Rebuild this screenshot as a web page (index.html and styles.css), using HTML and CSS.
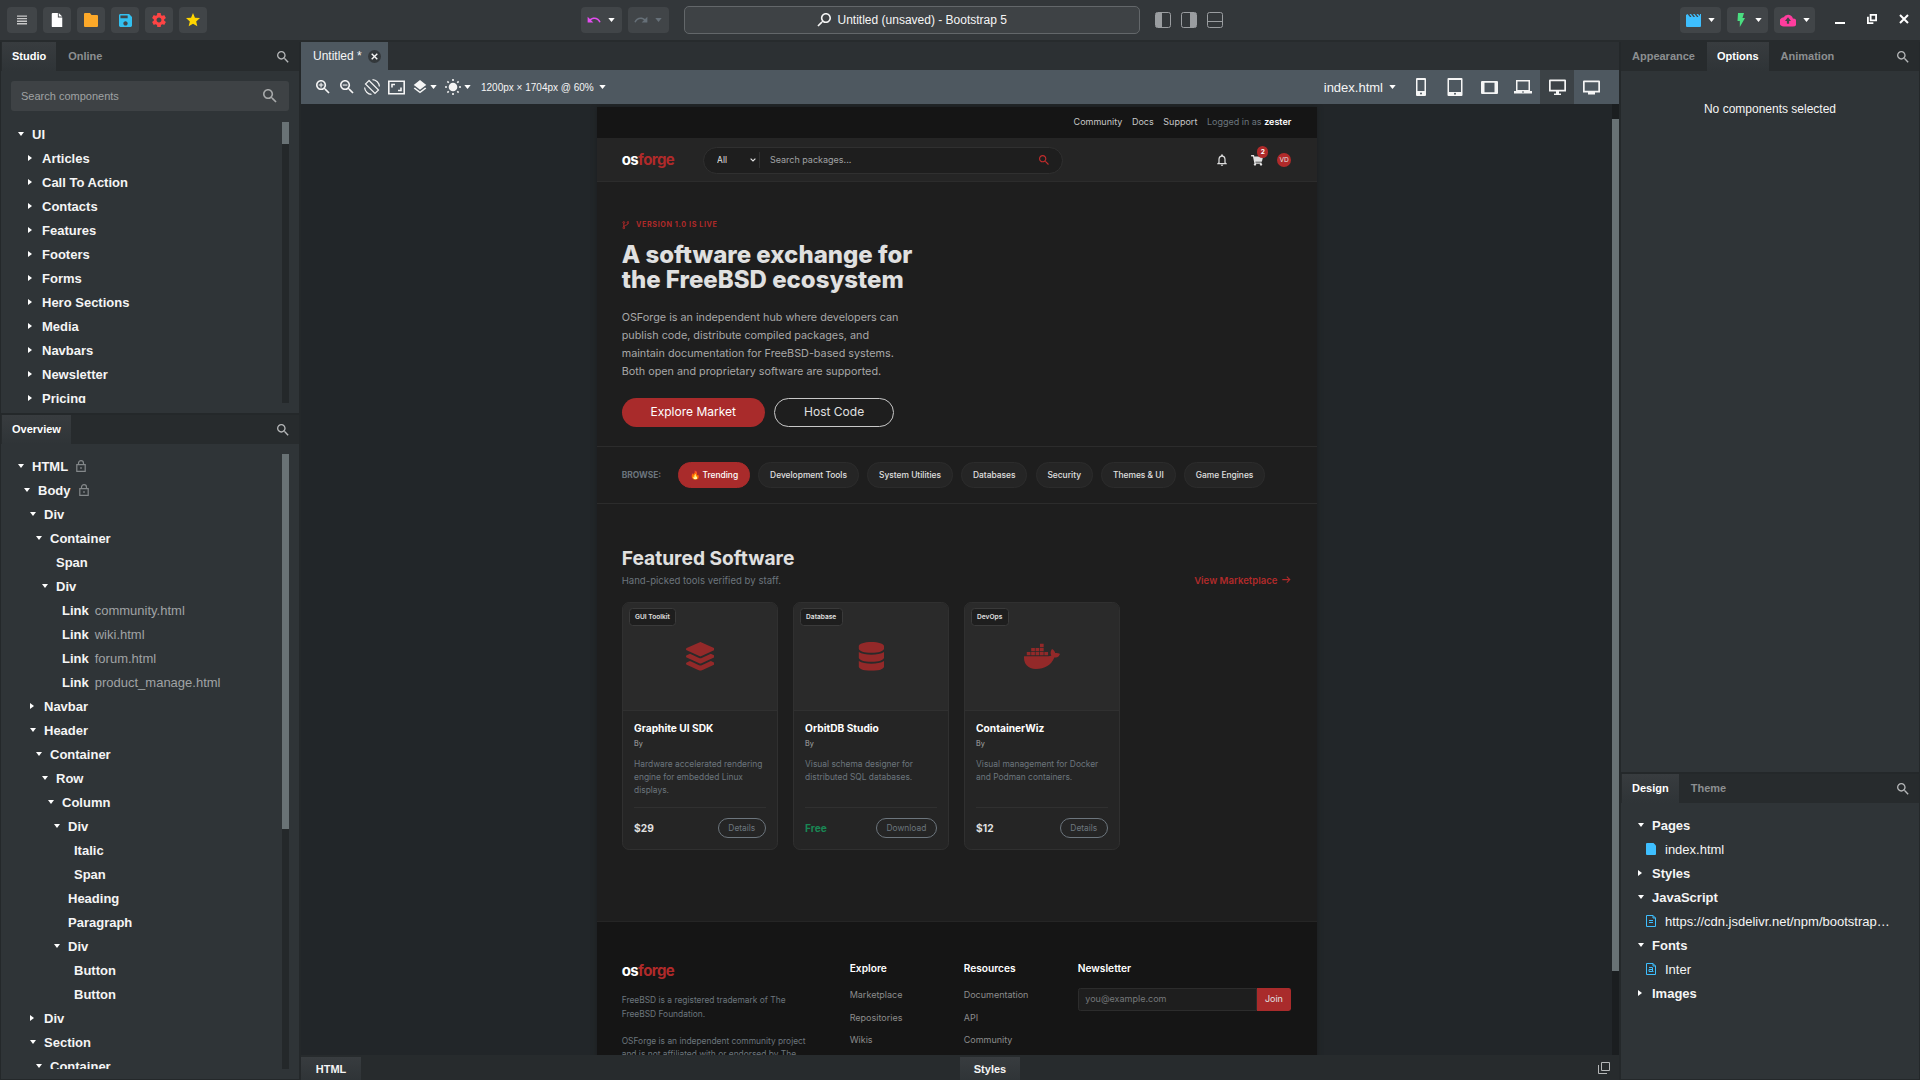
FILE: index.html
```html
<!DOCTYPE html>
<html lang="en">
<head>
    <meta charset="UTF-8">
    <meta name="viewport" content="width=device-width, initial-scale=1.0">
    <title>Untitled (unsaved) - Bootstrap 5</title>
    <link rel="stylesheet" href="styles.css">
</head>
<body>

<!-- Icon definitions -->
<svg class="defs" aria-hidden="true">
    <symbol id="i-menu" viewBox="0 0 11 10"><path d="M0 0h11v1.5H0zM0 2.8h11v1.5H0zM0 5.6h11v1.5H0zM0 8.4h11v1.5H0z"/></symbol>
    <symbol id="i-file" viewBox="0 0 14 16"><path d="M2 0h6v5h5v11H2a1 1 0 0 1-1-1V1a1 1 0 0 1 1-1zM9 0l4 4H9z"/></symbol>
    <symbol id="i-folder" viewBox="0 0 14 14"><path d="M1 0h5l1.500 2H13a1 1 0 0 1 1 1v10a1 1 0 0 1-1 1H1a1 1 0 0 1-1-1V1a1 1 0 0 1 1-1z"/></symbol>
    <symbol id="i-save" viewBox="3 3 18 18"><path d="M17 3H5c-1.11 0-2 .9-2 2v14c0 1.1.89 2 2 2h14c1.1 0 2-.9 2-2V7l-4-4zm-5 16c-1.66 0-3-1.34-3-3s1.34-3 3-3 3 1.34 3 3-1.34 3-3 3zm3-10H5V5h10v4z"/></symbol>
    <symbol id="i-gear" viewBox="2 2 20 20"><path d="M19.43 12.98c.04-.32.07-.64.07-.98s-.03-.66-.07-.98l2.11-1.65c.19-.15.24-.42.12-.64l-2-3.46c-.12-.22-.39-.3-.61-.22l-2.49 1c-.52-.4-1.08-.73-1.69-.98l-.38-2.65C14.46 2.18 14.25 2 14 2h-4c-.25 0-.46.18-.49.42l-.38 2.65c-.61.25-1.17.59-1.69.98l-2.49-1c-.23-.09-.49 0-.61.22l-2 3.46c-.13.22-.07.49.12.64l2.11 1.65c-.04.32-.07.65-.07.98s.03.66.07.98l-2.11 1.65c-.19.15-.24.42-.12.64l2 3.46c.12.22.39.3.61.22l2.49-1c.52.4 1.08.73 1.69.98l.38 2.65c.03.24.24.42.49.42h4c.25 0 .46-.18.49-.42l.38-2.65c.61-.25 1.17-.59 1.69-.98l2.49 1c.23.09.49 0 .61-.22l2-3.46c.12-.22.07-.49-.12-.64l-2.11-1.65zM12 15.5c-1.93 0-3.5-1.57-3.5-3.5s1.57-3.5 3.5-3.5 3.5 1.57 3.5 3.5-1.57 3.5-3.5 3.5z"/></symbol>
    <symbol id="i-star" viewBox="2 2 20 20"><path d="M12 17.27L18.18 21l-1.64-7.03L22 9.24l-7.19-.61L12 2 9.19 8.63 2 9.24l5.46 4.73L5.82 21z"/></symbol>
    <symbol id="i-undo" viewBox="1 4 22 16"><path d="M12.5 8c-2.65 0-5.05.99-6.9 2.6L2 7v9h9l-3.62-3.62c1.39-1.16 3.16-1.88 5.12-1.88 3.54 0 6.55 2.31 7.6 5.5l2.37-.78C21.08 11.03 17.15 8 12.5 8z"/></symbol>
    <symbol id="i-redo" viewBox="1 4 22 16"><path d="M18.4 10.6C16.55 8.99 14.15 8 11.5 8c-4.65 0-8.58 3.03-9.96 7.22L3.9 16c1.05-3.19 4.05-5.5 7.6-5.5 1.95 0 3.73.72 5.12 1.88L13 16h9V7l-3.6 3.6z"/></symbol>
    <symbol id="i-caret" viewBox="0 0 8 5"><path d="M0 0h8L4 5z"/></symbol>
    <symbol id="i-chevron" viewBox="0 0 10 7"><path fill="none" stroke="currentColor" stroke-width="2" d="M1 1l4 4 4-4"/></symbol>
    <symbol id="i-search" viewBox="3 3 18 18"><path d="M15.5 14h-.79l-.28-.27C15.41 12.59 16 11.11 16 9.5 16 5.91 13.09 3 9.5 3S3 5.91 3 9.5 5.91 16 9.5 16c1.61 0 3.09-.59 4.23-1.57l.27.28v.79l5 4.99L20.49 19l-4.99-5zm-6 0C7.01 14 5 11.99 5 9.5S7.01 5 9.5 5 14 7.01 14 9.5 11.99 14 9.5 14z"/></symbol>
    <symbol id="i-plus" viewBox="3 3 18 18"><path d="M15.5 14h-.79l-.28-.27C15.41 12.59 16 11.11 16 9.5 16 5.91 13.09 3 9.5 3S3 5.91 3 9.5 5.91 16 9.5 16c1.61 0 3.09-.59 4.23-1.57l.27.28v.79l5 4.99L20.49 19l-4.99-5zm-6 0C7.01 14 5 11.99 5 9.5S7.01 5 9.5 5 14 7.01 14 9.5 11.99 14 9.5 14z"/><path d="M12.5 10.2h-2.3v2.3H8.8v-2.3H6.5V8.800h2.300V6.500h1.400v2.300h2.300z"/></symbol>
    <symbol id="i-minus" viewBox="3 3 18 18"><path d="M15.5 14h-.79l-.28-.27C15.41 12.59 16 11.11 16 9.5 16 5.91 13.09 3 9.5 3S3 5.91 3 9.5 5.91 16 9.5 16c1.61 0 3.09-.59 4.23-1.57l.27.28v.79l5 4.99L20.49 19l-4.99-5zm-6 0C7.01 14 5 11.99 5 9.5S7.01 5 9.5 5 14 7.01 14 9.5 11.99 14 9.5 14z"/><path d="M6.5 8.8h6v1.4h-6z"/></symbol>
    <symbol id="i-rotate" viewBox="0 0 16 16"><g fill="none" stroke="currentColor" stroke-width="1.2"><path d="M5 1.500L14.500 11 11 14.500 1.500 5z"/><path d="M8.500.600A7.400 7.400 0 0 1 15.400 7.500M7.500 15.400A7.400 7.400 0 0 1 .6 8.500"/></g></symbol>
    <symbol id="i-fit" viewBox="0 0 17 14"><path fill="none" stroke="currentColor" stroke-width="1.600" d="M.8.8h15.400v12.400H.8zM4 7V4h3M13 7v3h-3"/></symbol>
    <symbol id="i-layers" viewBox="3 2 18 20"><path d="M11.99 18.54l-7.37-5.73L3 14.07l9 7 9-7-1.63-1.27-7.38 5.74zM12 16l7.36-5.73L21 9l-9-7-9 7 1.63 1.27L12 16z"/></symbol>
    <symbol id="i-sun" viewBox="0 0 16 16"><circle cx="8" cy="8" r="4.3"/><path stroke="currentColor" stroke-width="1.600" d="M8 0v2M8 14v2M0 8h2M14 8h2M2.400 2.400l1.300 1.300M12.300 12.300l1.300 1.300M2.400 13.600l1.300-1.300M12.300 3.700l1.300-1.300"/></symbol>
    <symbol id="i-phone" viewBox="0 0 10 18"><path fill-rule="evenodd" d="M1 0h8a1 1 0 0 1 1 1v16a1 1 0 0 1-1 1H1a1 1 0 0 1-1-1V1a1 1 0 0 1 1-1zm.5 2v11h7V2zM5 14.5a1 1 0 1 0 0 2 1 1 0 0 0 0-2z"/></symbol>
    <symbol id="i-tablet" viewBox="0 0 15 18"><path fill-rule="evenodd" d="M1 0h13a1 1 0 0 1 1 1v16a1 1 0 0 1-1 1H1a1 1 0 0 1-1-1V1a1 1 0 0 1 1-1zm.5 2v12h12V2zm6 12.8a1 1 0 1 0 0 2 1 1 0 0 0 0-2z"/></symbol>
    <symbol id="i-tabletw" viewBox="0 0 17 13"><path fill-rule="evenodd" d="M1 0h15a1 1 0 0 1 1 1v11a1 1 0 0 1-1 1H1a1 1 0 0 1-1-1V1a1 1 0 0 1 1-1zm2.5 1.8v9.4h10V1.8z"/></symbol>
    <symbol id="i-laptop" viewBox="0 0 18 14"><path fill-rule="evenodd" d="M2 0h14v11h2v2.500H0V11h2zm1.500 1.500v8.500h11V1.500zM8 11.500v1h2v-1z"/></symbol>
    <symbol id="i-desktop" viewBox="0 0 17 16"><path fill-rule="evenodd" d="M1 0h15a1 1 0 0 1 1 1v11H10v2h2v1.500H5V14h2v-2H0V1a1 1 0 0 1 1-1zm.7 1.700v8.600h13.600V1.700z"/></symbol>
    <symbol id="i-tv" viewBox="0 0 17 14"><path fill-rule="evenodd" d="M1 0h15a1 1 0 0 1 1 1v11h-5v2H5v-2H0V1a1 1 0 0 1 1-1zm.7 1.700v8.600h13.600V1.700z"/></symbol>
    <symbol id="i-left" viewBox="0 0 16 16"><rect x=".5" y=".5" width="15" height="15" rx="2" fill="none" stroke="currentColor"/><path d="M1 1h6v14H1z"/></symbol>
    <symbol id="i-right" viewBox="0 0 16 16"><rect x=".5" y=".5" width="15" height="15" rx="2" fill="none" stroke="currentColor"/><path d="M9 1h6v14H9z"/></symbol>
    <symbol id="i-bottom" viewBox="0 0 16 16"><rect x=".5" y=".5" width="15" height="15" rx="2" fill="none" stroke="currentColor"/><path fill="none" stroke="currentColor" d="M.5 9.500h15"/></symbol>
    <symbol id="i-clap" viewBox="0 0 15 13"><path d="M0 1l1.500-1L4 3h1.500L3.500 0H5l2.500 3H9L7 0h1.500L11 3h1.500l-2-3H12l2 2V0h1v12a1 1 0 0 1-1 1H1a1 1 0 0 1-1-1z"/></symbol>
    <symbol id="i-bolt" viewBox="0 0 8 14"><path d="M1 0h6L5.500 5H8L2.800 14V8H.5z"/></symbol>
    <symbol id="i-cloud" viewBox="0 0 17 14"><path fill-rule="evenodd" d="M13.700 5.400A5.300 5.300 0 0 0 3.900 4.200 4.900 4.900 0 0 0 4.500 14h8.800a4.300 4.300 0 0 0 .4-8.600zM8.500 4l3.200 4h-2v3H7.300V8h-2z"/></symbol>
    <symbol id="i-lock" viewBox="0 0 10 12"><path fill="none" stroke="currentColor" stroke-width="1.200" d="M.8 4.600h8.400v6.700H.8zM2.500 4.500V3.200a2.500 2.500 0 0 1 5 0v1.300"/><path d="M4.200 7.200h1.600v1.600H4.200z"/></symbol>
    <symbol id="i-page" viewBox="0 0 10 12"><path d="M0 1a1 1 0 0 1 1-1h6.500L10 2.500V11a1 1 0 0 1-1 1H1a1 1 0 0 1-1-1z"/></symbol>
    <symbol id="i-script" viewBox="0 0 10 12"><path fill="none" stroke="currentColor" d="M.5.5h6.500l2.500 2.500v8.500h-9zM7 .5V3h2.500M3 5.500h4M3 7.500h4"/></symbol>
    <symbol id="i-font" viewBox="0 0 10 12"><path fill="none" stroke="currentColor" d="M.5.5h6.500l2.500 2.500v8.500h-9zM7 .5V3h2.500M3 4.500h3.500V8.500H3V6.500h3.500M6.500 8.500h1"/></symbol>
    <symbol id="i-bell" viewBox="3 2 18 20"><path d="M12 22c1.1 0 2-.9 2-2h-4c0 1.1.9 2 2 2zm6-6v-5c0-3.07-1.63-5.64-4.5-6.32V4c0-.83-.67-1.5-1.5-1.5s-1.5.67-1.5 1.500v.68C7.64 5.36 6 7.92 6 11v5l-2 2v1h16v-1l-2-2zm-2 1H8v-6c0-2.48 1.51-4.5 4-4.5s4 2.02 4 4.5v6z"/></symbol>
    <symbol id="i-cart" viewBox="0 0 576 512"><path d="M528 301l47-208c4-15-8-29-23-29H159l-9-45c-2-11-12-19-24-19H24C11 0 0 11 0 24v16c0 13 11 24 24 24h70l70 343a56 56 0 1 0 67 9h210a56 56 0 1 0 64-10l5-26c4-14-8-28-23-28H218l-7-32h294c11 0 21-8 23-19z"/></symbol>
    <symbol id="i-branch" viewBox="0 0 12 14"><g fill="none" stroke="currentColor" stroke-width="1.600"><circle cx="2.500" cy="2.500" r="1.500"/><circle cx="2.500" cy="11.500" r="1.500"/><circle cx="9.500" cy="2.500" r="1.500"/><path d="M2.500 4v6M9.500 4c0 4-7 2-7 6"/></g></symbol>
    <symbol id="i-arrow" viewBox="0 0 14 12"><path fill="none" stroke="currentColor" stroke-width="1.800" d="M0 6h12.500M7.500 1l5 5-5 5"/></symbol>
    <symbol id="i-windows" viewBox="0 0 12 12"><path fill="none" stroke="currentColor" d="M3.500.5h8v8h-8zM.5 3v8.500H9"/></symbol>
    <symbol id="i-restore" viewBox="0 0 11 11"><path fill="none" stroke="currentColor" stroke-width="2" d="M4 1h6v6H4zM1 3v7h6"/></symbol>
    <symbol id="i-close" viewBox="0 0 10 10"><path fill="none" stroke="currentColor" stroke-width="2" d="M1 1l8 8M9 1L1 9"/></symbol>
    <symbol id="i-min" viewBox="0 0 10 10"><path d="M0 8h10v2H0z"/></symbol>
    <symbol id="i-stack" viewBox="0 0 512 512"><path d="M12.41 148.02l232.94 105.67c6.8 3.09 14.49 3.09 21.29 0l232.94-105.67c16.55-7.51 16.55-32.52 0-40.03L266.65 2.31a25.607 25.607 0 0 0-21.29 0L12.41 107.98c-16.55 7.51-16.55 32.53 0 40.04zm487.18 88.28l-58.09-26.33-161.64 73.27c-7.56 3.43-15.59 5.17-23.86 5.17s-16.29-1.74-23.86-5.17L70.51 209.97l-58.1 26.33c-16.55 7.5-16.55 32.5 0 40l232.94 105.59c6.8 3.08 14.49 3.08 21.29 0L499.59 276.3c16.55-7.5 16.55-32.5 0-40zm0 127.8l-57.87-26.23-161.86 73.37c-7.56 3.43-15.59 5.17-23.86 5.17s-16.29-1.74-23.86-5.17L70.29 337.87 12.41 364.1c-16.55 7.5-16.55 32.5 0 40l232.94 105.59c6.8 3.08 14.49 3.08 21.29 0L499.59 404.1c16.55-7.5 16.55-32.5 0-40z"/></symbol>
    <symbol id="i-db" viewBox="0 0 448 512"><path d="M448 73.143v45.714C448 159.143 347.667 192 224 192S0 159.143 0 118.857V73.143C0 32.857 100.333 0 224 0s224 32.857 224 73.143zM448 176v102.857C448 319.143 347.667 352 224 352S0 319.143 0 278.857V176c48.125 33.143 136.208 48.572 224 48.572S399.874 209.143 448 176zm0 160v102.857C448 479.143 347.667 512 224 512S0 479.143 0 438.857V336c48.125 33.143 136.208 48.572 224 48.572S399.874 369.143 448 336z"/></symbol>
    <symbol id="i-docker" viewBox="0 0 640 512"><path d="M349.9 236.3h-66.1v-59.4h66.1v59.4zm0-204.3h-66.1v60.7h66.1V32zm78.2 144.8H362v59.4h66.1v-59.4zm-156.3-72.1h-66.1v60.1h66.1v-60.1zm78.1 0h-66.1v60.1h66.1v-60.1zm276.8 100c-14.4-9.7-47.6-13.2-73.1-8.4-3.3-24-16.7-44.9-41.1-63.7l-14-9.3-9.3 14c-18.4 27.8-23.4 73.6-3.7 103.8-8.7 4.7-25.8 11.1-48.4 10.7H2.4c-8.7 50.8 5.8 116.8 44 162.1 37.1 43.9 92.7 66.2 165.4 66.2 157.4 0 273.9-72.5 328.4-204.2 21.4.4 67.6.1 91.3-45.2 1.5-2.5 6.6-13.2 8.5-17.1l-13.3-8.9zm-511.1-27.9h-66v59.4h66.1v-59.4zm78.1 0h-66.1v59.4h66.1v-59.4zm78.1 0h-66.1v59.4h66.1v-59.4zm-78.1-72.1h-66.1v60.1h66.1v-60.1z"/></symbol>
</svg>

<div class="app">
    <!-- Top bar -->
    <header class="topbar">
        <div class="top-left">
            <button class="tool wide" aria-label="Menu"><svg class="ic10"><use href="#i-menu"/></svg></button>
            <button class="tool white" aria-label="New"><svg class="ic14"><use href="#i-file"/></svg></button>
            <button class="tool orange" aria-label="Open"><svg class="ic14"><use href="#i-folder"/></svg></button>
            <button class="tool blue" aria-label="Save"><svg class="ic13"><use href="#i-save"/></svg></button>
            <button class="tool red" aria-label="Settings"><svg class="ic14"><use href="#i-gear"/></svg></button>
            <button class="tool yellow" aria-label="Favorites"><svg class="ic14"><use href="#i-star"/></svg></button>
        </div>
        <div class="top-mid">
            <button class="tool split purple" aria-label="Undo"><svg class="ic14"><use href="#i-undo"/></svg><svg class="caret"><use href="#i-caret"/></svg></button>
            <button class="tool split disabled" aria-label="Redo"><svg class="ic14"><use href="#i-redo"/></svg><svg class="caret"><use href="#i-caret"/></svg></button>
            <button class="command"><svg class="ic14 flip"><use href="#i-search"/></svg>Untitled (unsaved) - Bootstrap 5</button>
            <button class="plain" aria-label="Left panel"><svg class="ic16"><use href="#i-left"/></svg></button>
            <button class="plain" aria-label="Right panel"><svg class="ic16"><use href="#i-right"/></svg></button>
            <button class="plain" aria-label="Bottom panel"><svg class="ic16"><use href="#i-bottom"/></svg></button>
        </div>
        <div class="top-right">
            <button class="tool split sky" aria-label="Preview"><svg class="ic15"><use href="#i-clap"/></svg><svg class="caret"><use href="#i-caret"/></svg></button>
            <button class="tool split green" aria-label="Run"><svg class="ic14"><use href="#i-bolt"/></svg><svg class="caret"><use href="#i-caret"/></svg></button>
            <button class="tool split pink" aria-label="Publish"><svg class="ic16"><use href="#i-cloud"/></svg><svg class="caret"><use href="#i-caret"/></svg></button>
            <div class="window-buttons">
                <button aria-label="Minimize"><svg class="ic10"><use href="#i-min"/></svg></button>
                <button aria-label="Restore"><svg class="ic10"><use href="#i-restore"/></svg></button>
                <button aria-label="Close"><svg class="ic10"><use href="#i-close"/></svg></button>
            </div>
        </div>
    </header>

    <!-- Left column -->
    <aside class="side">
        <section class="panel studio">
            <div class="tabs">
                <button class="tab active">Studio</button>
                <button class="tab">Online</button>
                <button class="tab-search" aria-label="Search"><svg class="ic12"><use href="#i-search"/></svg></button>
            </div>
            <div class="panel-body">
                <label class="search-box"><input type="text" placeholder="Search components" aria-label="Search components"><svg class="ic14"><use href="#i-search"/></svg></label>
                <div class="scroll-area">
                    <ul class="tree">
                        <li class="l0 open"><b>UI</b></li>
                        <li class="sub closed"><b>Articles</b></li>
                        <li class="sub closed"><b>Call To Action</b></li>
                        <li class="sub closed"><b>Contacts</b></li>
                        <li class="sub closed"><b>Features</b></li>
                        <li class="sub closed"><b>Footers</b></li>
                        <li class="sub closed"><b>Forms</b></li>
                        <li class="sub closed"><b>Hero Sections</b></li>
                        <li class="sub closed"><b>Media</b></li>
                        <li class="sub closed"><b>Navbars</b></li>
                        <li class="sub closed"><b>Newsletter</b></li>
                        <li class="sub closed"><b>Pricing</b></li>
                    </ul>
                    <div class="track"><div class="thumb thumb-studio"></div></div>
                </div>
            </div>
        </section>
        <section class="panel overview">
            <div class="tabs">
                <button class="tab active">Overview</button>
                <button class="tab-search" aria-label="Search"><svg class="ic12"><use href="#i-search"/></svg></button>
            </div>
            <div class="panel-body">
                <div class="scroll-area">
                    <ul class="tree">
                        <li class="l0 open"><b>HTML</b><svg class="lock"><use href="#i-lock"/></svg></li>
                        <li class="l1 open"><b>Body</b><svg class="lock"><use href="#i-lock"/></svg></li>
                        <li class="l2 open"><b>Div</b></li>
                        <li class="l3 open"><b>Container</b></li>
                        <li class="l4"><b>Span</b></li>
                        <li class="l4 open"><b>Div</b></li>
                        <li class="l5"><b>Link</b><span>community.html</span></li>
                        <li class="l5"><b>Link</b><span>wiki.html</span></li>
                        <li class="l5"><b>Link</b><span>forum.html</span></li>
                        <li class="l5"><b>Link</b><span>product_manage.html</span></li>
                        <li class="l2 closed"><b>Navbar</b></li>
                        <li class="l2 open"><b>Header</b></li>
                        <li class="l3 open"><b>Container</b></li>
                        <li class="l4 open"><b>Row</b></li>
                        <li class="l5 open"><b>Column</b></li>
                        <li class="l6 open"><b>Div</b></li>
                        <li class="l7"><b>Italic</b></li>
                        <li class="l7"><b>Span</b></li>
                        <li class="l6"><b>Heading</b></li>
                        <li class="l6"><b>Paragraph</b></li>
                        <li class="l6 open"><b>Div</b></li>
                        <li class="l7"><b>Button</b></li>
                        <li class="l7"><b>Button</b></li>
                        <li class="l2 closed"><b>Div</b></li>
                        <li class="l2 open"><b>Section</b></li>
                        <li class="l3 open"><b>Container</b></li>
                    </ul>
                    <div class="track"><div class="thumb thumb-overview"></div></div>
                </div>
            </div>
        </section>
    </aside>

    <!-- Editor -->
    <main class="editor">
        <div class="doc-tabs">
            <div class="doc-tab">Untitled *<button aria-label="Close tab"><svg><use href="#i-close"/></svg></button></div>
        </div>
        <div class="toolbar">
            <button class="zoom" aria-label="Zoom in"><svg class="ic14"><use href="#i-plus"/></svg></button>
            <button class="zoom" aria-label="Zoom out"><svg class="ic14"><use href="#i-minus"/></svg></button>
            <button aria-label="Rotate"><svg class="ic16"><use href="#i-rotate"/></svg></button>
            <button aria-label="Fit"><svg class="ic17"><use href="#i-fit"/></svg></button>
            <button aria-label="Layers"><svg class="ic14"><use href="#i-layers"/></svg><svg class="caret"><use href="#i-caret"/></svg></button>
            <button aria-label="Theme"><svg class="ic16"><use href="#i-sun"/></svg><svg class="caret"><use href="#i-caret"/></svg></button>
            <button class="size">1200px × 1704px @ 60%<svg class="caret"><use href="#i-caret"/></svg></button>
            <button class="page-name">index.html<svg class="caret"><use href="#i-caret"/></svg></button>
            <div class="devices">
                <button aria-label="Phone"><svg class="ic18"><use href="#i-phone"/></svg></button>
                <button aria-label="Tablet"><svg class="ic18"><use href="#i-tablet"/></svg></button>
                <button aria-label="Tablet landscape"><svg class="ic17"><use href="#i-tabletw"/></svg></button>
                <button aria-label="Laptop"><svg class="ic18"><use href="#i-laptop"/></svg></button>
                <button class="active" aria-label="Desktop"><svg class="ic17"><use href="#i-desktop"/></svg></button>
                <button aria-label="Large screen"><svg class="ic17"><use href="#i-tv"/></svg></button>
            </div>
        </div>
        <div class="canvas">
            <div class="canvas-view">
                <!-- Previewed page, 1200px wide at 60% -->
                <div class="page">
                    <div class="site-top">
                        <div class="container">
                            <a href="#">Community</a>
                            <a href="#">Docs</a>
                            <a href="#">Support</a>
                            <span>Logged in as <strong>zester</strong></span>
                        </div>
                    </div>
                    <nav class="site-nav">
                        <div class="container">
                            <a class="brand" href="#">os<span>forge</span></a>
                            <form class="site-search">
                                <label class="category"><select aria-label="Category"><option>All</option></select><svg><use href="#i-chevron"/></svg></label>
                                <input type="text" placeholder="Search packages..." aria-label="Search packages">
                                <button type="button" aria-label="Search"><svg><use href="#i-search"/></svg></button>
                            </form>
                            <div class="site-actions">
                                <a href="#" aria-label="Notifications"><svg class="bell"><use href="#i-bell"/></svg></a>
                                <a class="cart" href="#" aria-label="Cart"><svg><use href="#i-cart"/></svg><span class="count">2</span></a>
                                <a class="avatar" href="#">VD</a>
                            </div>
                        </div>
                    </nav>
                    <header class="hero">
                        <div class="container">
                            <div class="release"><svg><use href="#i-branch"/></svg><span>VERSION 1.0 IS LIVE</span></div>
                            <h1>A software exchange for<br>the FreeBSD ecosystem</h1>
                            <p>OSForge is an independent hub where developers can publish code, distribute compiled packages, and maintain documentation for FreeBSD-based systems. Both open and proprietary software are supported.</p>
                            <div class="hero-buttons">
                                <button class="btn primary">Explore Market</button>
                                <button class="btn outline">Host Code</button>
                            </div>
                        </div>
                    </header>
                    <div class="browse">
                        <div class="container">
                            <span class="browse-label">BROWSE:</span>
                            <a class="pill active" href="#">🔥 Trending</a>
                            <a class="pill" href="#">Development Tools</a>
                            <a class="pill" href="#">System Utilities</a>
                            <a class="pill" href="#">Databases</a>
                            <a class="pill" href="#">Security</a>
                            <a class="pill" href="#">Themes &amp; UI</a>
                            <a class="pill" href="#">Game Engines</a>
                        </div>
                    </div>
                    <section class="featured">
                        <div class="container">
                            <div class="section-head">
                                <div>
                                    <h2>Featured Software</h2>
                                    <p>Hand-picked tools verified by staff.</p>
                                </div>
                                <a href="#">View Marketplace<svg><use href="#i-arrow"/></svg></a>
                            </div>
                            <div class="cards">
                                <article class="card">
                                    <div class="card-top"><span class="tag">GUI Toolkit</span><svg><use href="#i-stack"/></svg></div>
                                    <div class="card-body">
                                        <h3>Graphite UI SDK</h3>
                                        <div class="by">By</div>
                                        <p>Hardware accelerated rendering engine for embedded Linux displays.</p>
                                        <div class="card-foot"><strong>$29</strong><button>Details</button></div>
                                    </div>
                                </article>
                                <article class="card">
                                    <div class="card-top"><span class="tag">Database</span><svg><use href="#i-db"/></svg></div>
                                    <div class="card-body">
                                        <h3>OrbitDB Studio</h3>
                                        <div class="by">By</div>
                                        <p>Visual schema designer for distributed SQL databases.</p>
                                        <div class="card-foot"><strong class="free">Free</strong><button>Download</button></div>
                                    </div>
                                </article>
                                <article class="card">
                                    <div class="card-top"><span class="tag">DevOps</span><svg class="docker"><use href="#i-docker"/></svg></div>
                                    <div class="card-body">
                                        <h3>ContainerWiz</h3>
                                        <div class="by">By</div>
                                        <p>Visual management for Docker and Podman containers.</p>
                                        <div class="card-foot"><strong>$12</strong><button>Details</button></div>
                                    </div>
                                </article>
                            </div>
                        </div>
                    </section>
                    <footer class="site-footer">
                        <div class="container">
                            <div class="about">
                                <a class="brand" href="#">os<span>forge</span></a>
                                <p>FreeBSD is a registered trademark of The FreeBSD Foundation.</p>
                                <p>OSForge is an independent community project and is not affiliated with or endorsed by The FreeBSD Foundation.</p>
                            </div>
                            <div>
                                <h4>Explore</h4>
                                <a href="#">Marketplace</a>
                                <a href="#">Repositories</a>
                                <a href="#">Wikis</a>
                            </div>
                            <div>
                                <h4>Resources</h4>
                                <a href="#">Documentation</a>
                                <a href="#">API</a>
                                <a href="#">Community</a>
                            </div>
                            <div>
                                <h4>Newsletter</h4>
                                <form class="join">
                                    <input type="email" placeholder="you@example.com" aria-label="Email">
                                    <button type="button">Join</button>
                                </form>
                            </div>
                        </div>
                    </footer>
                </div>
            </div>
            <div class="track canvas-track"><div class="thumb thumb-canvas"></div></div>
        </div>
        <div class="bottom-tabs">
            <button>HTML</button>
            <button>Styles</button>
            <button class="detach" aria-label="Detach"><svg class="ic12"><use href="#i-windows"/></svg></button>
        </div>
    </main>

    <!-- Right column -->
    <aside class="side">
        <section class="panel options">
            <div class="tabs">
                <button class="tab">Appearance</button>
                <button class="tab active">Options</button>
                <button class="tab">Animation</button>
                <button class="tab-search" aria-label="Search"><svg class="ic12"><use href="#i-search"/></svg></button>
            </div>
            <p class="empty">No components selected</p>
        </section>
        <section class="panel design">
            <div class="tabs">
                <button class="tab active">Design</button>
                <button class="tab">Theme</button>
                <button class="tab-search" aria-label="Search"><svg class="ic12"><use href="#i-search"/></svg></button>
            </div>
            <div class="panel-body">
                <ul class="tree">
                    <li class="l0 open"><b>Pages</b></li>
                    <li class="file"><svg><use href="#i-page"/></svg>index.html</li>
                    <li class="l0 closed"><b>Styles</b></li>
                    <li class="l0 open"><b>JavaScript</b></li>
                    <li class="file"><svg><use href="#i-script"/></svg>https://cdn.jsdelivr.net/npm/bootstrap…</li>
                    <li class="l0 open"><b>Fonts</b></li>
                    <li class="file"><svg><use href="#i-font"/></svg>Inter</li>
                    <li class="l0 closed"><b>Images</b></li>
                </ul>
            </div>
        </section>
    </aside>
</div>

</body>
</html>
```

FILE: styles.css
```css
/* General Reset */
* {
    box-sizing: border-box;
    margin: 0;
    padding: 0;
}

body {
    font-family: "Liberation Sans", Arial, sans-serif;
    font-size: 12px;
    color: #f5f5f5;
    background-color: #24282a;
    overflow: hidden;
}

button, input, select {
    font: inherit;
    color: inherit;
    background: none;
    border: 0;
}

input, select {
    outline: 0;
    min-width: 0;
}

a {
    color: inherit;
    text-decoration: none;
}

ul {
    list-style: none;
}

svg {
    fill: currentColor;
    flex-shrink: 0;
}

.defs {
    display: none;
}

.ic10 { width: 10px; height: 10px; }
.ic12 { width: 12px; height: 12px; }
.ic13 { width: 13px; height: 13px; }
.ic14 { width: 14px; height: 14px; }
.ic15 { width: 15px; height: 15px; }
.ic16 { width: 16px; height: 16px; }
.ic17 { width: 17px; height: 17px; }
.ic18 { width: 18px; height: 18px; }

.caret {
    width: 7px;
    height: 4px;
    color: #fff;
}

.app {
    display: grid;
    grid-template-columns: 300px 1fr 300px;
    grid-template-rows: 42px 1fr;
    height: 100vh;
}

/* Top bar */
.topbar {
    grid-column: 1 / -1;
    display: flex;
    align-items: center;
    padding: 0 4px 0 7px;
    background-color: #33373a;
    border-bottom: 2px solid #272b2d;
}

.top-left, .top-mid, .top-right {
    display: flex;
    align-items: center;
    gap: 6px;
}

.top-left {
    flex: 24 1 0;
}

.top-right {
    flex: 29 1 0;
    justify-content: flex-end;
}

.tool {
    display: flex;
    align-items: center;
    justify-content: center;
    width: 28px;
    height: 26px;
    background-color: #414548;
    border-radius: 4px;
}

.tool.wide {
    width: 30px;
    color: #c8c8c8;
}

.tool.split {
    width: 41px;
    gap: 7px;
}

.white { color: #fff; }
.orange { color: #fda929; }
.blue { color: #32c0f0; }
.red { color: #ff4444; }
.yellow { color: #ffd500; }
.purple { color: #e44df0; }
.sky { color: #3ebfff; }
.green { color: #4ade80; }
.pink { color: #ff3d9e; }
.disabled, .disabled .caret { color: #667078; }

.command {
    display: flex;
    align-items: center;
    justify-content: center;
    gap: 7px;
    width: 456px;
    height: 28px;
    margin: 0 9px;
    background-color: #3e4245;
    border: 1px solid #63676a;
    border-radius: 5px;
}

.flip {
    transform: scaleX(-1);
}

.plain {
    display: flex;
    color: #9a9da0;
    padding-right: 4px;
}

.plain:last-child {
    padding-right: 0;
}

.window-buttons {
    display: flex;
    gap: 8px;
    margin-left: 7px;
    color: #fff;
}

.window-buttons button {
    width: 24px;
    height: 24px;
}

/* Side panels */
.side {
    display: flex;
    flex-direction: column;
    gap: 2px;
    padding: 0 1px 1px;
    min-height: 0;
}

.panel {
    display: flex;
    flex-direction: column;
    min-height: 0;
    background-color: #2f3437;
}

.studio {
    flex: 371 1 0;
}

.overview {
    flex: 664 1 0;
}

.options {
    flex: 730 1 0;
}

.design {
    flex: 305 1 0;
}

.tabs {
    display: flex;
    flex: none;
    gap: 2px;
    height: 29px;
    padding-left: 1px;
    background-color: #272b2d;
}

.tab {
    padding: 0 10px 1px;
    font-size: 11px;
    font-weight: bold;
    color: #8c8f91;
}

.tab.active {
    color: #fff;
    background-image: linear-gradient(#383c3f, #2f3437);
}

.tab-search {
    width: 32px;
    margin-left: auto;
    color: #b5b7b8;
}

.tab-search svg {
    vertical-align: middle;
}

.panel-body {
    display: flex;
    flex-direction: column;
    flex: 1;
    gap: 11px;
    min-height: 0;
    padding: 10px;
}

.search-box {
    display: flex;
    align-items: center;
    flex: none;
    height: 30px;
    padding: 0 12px 0 10px;
    font-size: 11px;
    color: #a7a9aa;
    background-color: #3e4245;
    border-radius: 3px;
}

.search-box input {
    flex: 1;
}

::placeholder {
    color: #a0a2a4;
    opacity: 1;
}

.scroll-area {
    display: flex;
    flex: 1;
    min-height: 0;
    overflow: hidden;
}

.track {
    width: 7px;
    background-color: #24282a;
}

.thumb {
    width: 7px;
    background-color: #697275;
}

.thumb-studio {
    height: 8%;
}

.thumb-overview {
    height: 61%;
}

/* Trees */
.tree {
    flex: 1;
    font-size: 13px;
    min-width: 0;
}

.tree li {
    display: flex;
    align-items: center;
    height: 24px;
    white-space: nowrap;
}

.tree li::before {
    content: "";
    width: 14px;
    height: 6px;
    flex: none;
}

.tree li.open::before {
    background-color: #fff;
    width: 6px;
    height: 4px;
    margin-right: 8px;
    clip-path: polygon(0 0, 100% 0, 50% 100%);
}

.tree li.closed::before {
    background-color: #fff;
    width: 4px;
    height: 6px;
    margin-right: 10px;
    clip-path: polygon(0 0, 100% 50%, 0 100%);
}

.tree li span {
    margin-left: 6px;
    color: #a0a3a5;
}

.l0 { padding-left: 7px; }
.sub { padding-left: 17px; }
.l1 { padding-left: 13px; }
.l2 { padding-left: 19px; }
.l3 { padding-left: 25px; }
.l4 { padding-left: 31px; }
.l5 { padding-left: 37px; }
.l6 { padding-left: 43px; }
.l7 { padding-left: 49px; }

.tree li.file::before {
    width: 15px;
}

.file svg {
    width: 10px;
    height: 12px;
    margin-right: 9px;
    color: #3ebfff;
}

.lock {
    width: 10px;
    height: 12px;
    margin-left: 8px;
    color: #84888a;
}

.empty {
    padding: 31px 0;
    text-align: center;
}

/* Editor */
.editor {
    display: flex;
    flex-direction: column;
    min-width: 0;
    min-height: 0;
    padding: 0 1px;
}

.doc-tabs {
    display: flex;
    height: 28px;
    background-color: #2c3033;
}

.doc-tab {
    display: flex;
    align-items: center;
    gap: 6px;
    padding: 0 7px 0 12px;
    background-color: #4e5860;
}

.doc-tab button {
    display: flex;
    padding: 3px;
    border-radius: 50%;
    background-color: #33383b;
}

.doc-tab svg {
    width: 7px;
    height: 7px;
}

.toolbar {
    display: flex;
    align-items: center;
    gap: 8px;
    height: 34px;
    padding: 0 11px 0 15px;
    background-color: #4e5860;
}

.toolbar button {
    display: flex;
    align-items: center;
    gap: 3px;
}

.toolbar .zoom {
    padding-right: 2px;
}

.toolbar .size {
    gap: 5px;
    padding-left: 2px;
    font-size: 10px;
}

.toolbar .page-name {
    gap: 6px;
    margin-left: auto;
    font-size: 13px;
}

.devices {
    display: flex;
    height: 100%;
}

.devices button {
    justify-content: center;
    width: 34px;
}

.devices .active {
    background-color: #3c4246;
}

.canvas {
    display: flex;
    flex: 1;
    min-height: 0;
    background-color: #222629;
}

.canvas-view {
    flex: 1;
    overflow: hidden;
    padding-top: 3px;
}

.canvas-track {
    padding-top: 15px;
    background-color: #1b1e20;
}

.thumb-canvas {
    height: 91%;
}

.bottom-tabs {
    display: grid;
    grid-template-columns: 1fr 1fr;
    height: 25px;
    padding-top: 2px;
    background-color: #272b2d;
    position: relative;
}

.bottom-tabs button {
    justify-self: start;
    width: 60px;
    font-size: 11px;
    font-weight: bold;
    background-image: linear-gradient(#383c3f, #2f3437);
}

.bottom-tabs .detach {
    position: absolute;
    right: 9px;
    top: 7px;
    width: 12px;
    color: #b5b7b8;
    background: none;
}

/* Previewed page */
.page {
    zoom: 0.6;
    width: 1200px;
    margin: 0 auto;
    font-family: Inter, sans-serif;
    font-size: 16px;
    line-height: 24px;
    color: #e0e0e0;
    background-color: #1e1e1e;
    box-shadow: 0 0 8px #1a1d1f;
}

.container {
    max-width: 1140px;
    margin: 0 auto;
    padding: 0 12px;
}

.site-top {
    background-color: #151515;
    border-bottom: 1px solid #252525;
}

.site-top .container {
    display: flex;
    justify-content: flex-end;
    align-items: center;
    gap: 16px;
    height: 52px;
    font-size: 15px;
    color: #c8c8c8;
}

.site-top span {
    color: #6c757d;
}

.site-top strong {
    font-weight: 600;
    color: #fff;
}

.site-nav {
    background-color: #252525;
    border-bottom: 1px solid #2c2c2c;
}

.site-nav .container {
    display: flex;
    align-items: center;
    height: 70px;
}

.brand {
    font-size: 25px;
    font-weight: 700;
    letter-spacing: -1px;
    color: #fff;
}

.brand span {
    color: #b02a2a;
}

.site-search {
    display: flex;
    align-items: center;
    width: 600px;
    height: 45px;
    margin-left: 48px;
    padding: 0 22px;
    font-size: 15px;
    background-color: #1e1e1e;
    border: 1px solid #303030;
    border-radius: 23px;
}

.category {
    display: flex;
    align-items: center;
    width: 72px;
    height: 26px;
    font-size: 14px;
    border-right: 1px solid #303030;
}

.category select {
    appearance: none;
    flex: 1;
}

.category svg {
    width: 10px;
    height: 7px;
    margin-right: 6px;
}

.site-search input {
    flex: 1;
    padding-left: 16px;
}

.site-search button {
    display: flex;
    color: #c02c2c;
}

.site-search svg {
    flex: none;
}

.site-search button svg {
    width: 17px;
    height: 17px;
}

.site-actions {
    display: flex;
    align-items: center;
    gap: 24px;
    margin-left: auto;
}

.site-actions a {
    display: flex;
}

.bell {
    width: 20px;
    height: 20px;
    margin-right: 14px;
}

.cart {
    position: relative;
}

.cart svg {
    width: 20px;
    height: 18px;
}

.count {
    position: absolute;
    left: 11px;
    top: -14px;
    padding: 0 6px;
    font-size: 11px;
    line-height: 20px;
    font-weight: 700;
    color: #fff;
    background-color: #b02a2a;
    border-radius: 10px;
}

.avatar {
    align-items: center;
    justify-content: center;
    width: 24px;
    height: 24px;
    font-size: 11px;
    background-color: #b02a2a;
    border-radius: 50%;
}

.hero {
    padding: 62px 0 32px;
}

.release {
    display: flex;
    align-items: center;
    gap: 11px;
    margin-bottom: 17px;
    font-size: 12px;
    line-height: 20px;
    font-weight: 700;
    letter-spacing: 1px;
    color: #b02a2a;
}

.release svg {
    width: 13px;
    height: 14px;
}

h1 {
    font-size: 40px;
    line-height: 43px;
    font-weight: 800;
}

.hero p {
    width: 480px;
    margin: 27px 0 28px;
    font-size: 18px;
    line-height: 30px;
    color: #a8a8a8;
}

.hero-buttons {
    display: flex;
    gap: 16px;
}

.btn {
    height: 48px;
    padding: 0 48px;
    font-size: 20px;
    border-radius: 24px;
}

.btn.primary {
    color: #fff;
    background-color: #a92b2b;
}

.btn.outline {
    border: 1px solid #c8c8c8;
}

.browse {
    border-top: 1px solid #2c2c2c;
    border-bottom: 1px solid #2c2c2c;
}

.browse .container {
    display: flex;
    align-items: center;
    gap: 14px;
    height: 93px;
    font-size: 14px;
}

.browse-label {
    margin-right: 15px;
    font-weight: 700;
    font-size: 14px;
    color: #6c757d;
}

.pill {
    padding: 8px 18px;
    font-weight: 500;
    background-color: #252525;
    border: 1px solid #2c2c2c;
    border-radius: 21px;
}

.pill.active {
    color: #fff;
    background-color: #a92b2b;
    border-color: #a92b2b;
}

.featured {
    padding: 71px 0 119px;
}

.section-head {
    display: flex;
    justify-content: space-between;
    align-items: flex-end;
    margin-bottom: 23px;
    font-size: 16px;
}

h2 {
    margin-bottom: 7px;
    font-size: 32px;
    line-height: 38px;
    font-weight: 700;
}

.section-head p {
    color: #6c757d;
}

.section-head a {
    font-weight: 600;
    color: #b02a2a;
}

.section-head svg {
    width: 15px;
    height: 12px;
    margin-left: 8px;
}

.cards {
    display: grid;
    grid-template-columns: repeat(4, 1fr);
    gap: 24px;
}

.card {
    display: flex;
    flex-direction: column;
    background-color: #252525;
    border: 1px solid #303030;
    border-radius: 12px;
    overflow: hidden;
}

.card-top {
    position: relative;
    display: flex;
    align-items: center;
    justify-content: center;
    height: 181px;
    color: #932929;
    background-color: #2a2a2a;
    border-bottom: 1px solid #303030;
}

.card-top svg {
    width: 48px;
    height: 48px;
}

.card-top .docker {
    width: 60px;
}

.tag {
    position: absolute;
    left: 10px;
    top: 9px;
    padding: 0 9px;
    font-size: 11px;
    line-height: 27px;
    font-weight: 600;
    color: #e0e0e0;
    background-color: #1e1e1e;
    border: 1px solid #3a3a3a;
    border-radius: 6px;
}

.card-body {
    display: flex;
    flex-direction: column;
    flex: 1;
    padding: 18px 19px 19px;
}

h3 {
    font-size: 17px;
    line-height: 20px;
    font-weight: 700;
    color: #fff;
}

.by {
    margin: 8px 0 14px;
    font-size: 12px;
    line-height: 18px;
    color: #a8a8a8;
}

.card-body p {
    flex: 1;
    font-size: 14px;
    line-height: 22px;
    color: #6c757d;
}

.card-foot {
    display: flex;
    align-items: center;
    justify-content: space-between;
    margin-top: 16px;
    padding-top: 16px;
    font-size: 17px;
    border-top: 1px solid #303030;
}

.card-foot .free {
    color: #198754;
}

.card-foot button {
    height: 33px;
    padding: 0 16px;
    font-size: 14px;
    color: #6c757d;
    border: 1px solid #6c757d;
    border-radius: 17px;
}

.site-footer {
    background-color: #151515;
    border-top: 1px solid #252525;
}

.site-footer .container {
    display: grid;
    grid-template-columns: 4fr 2fr 2fr 4fr;
    padding: 66px 0;
}

.site-footer .container > div {
    padding: 0 12px;
    font-size: 15px;
    color: #8c8c8c;
}

.site-footer .container > .about {
    padding-right: 36px;
}

.site-footer .brand {
    display: block;
    margin: 4px 0 25px;
    line-height: 24px;
}

.site-footer p {
    margin-bottom: 22px;
    font-size: 14px;
    line-height: 23px;
    color: #6c757d;
}

h4 {
    margin-bottom: 23px;
    font-size: 17px;
    line-height: 20px;
    font-weight: 600;
    color: #fff;
}

.site-footer div > a:not(.brand) {
    display: block;
    margin-bottom: 14px;
}

.join {
    display: flex;
    height: 38px;
}

.join input {
    flex: 1;
    padding-left: 11px;
    background-color: #1e1e1e;
    border: 1px solid #2c2c2c;
    border-radius: 4px 0 0 4px;
}

.join ::placeholder {
    color: #75787a;
}

.join button {
    width: 58px;
    color: #e0e0e0;
    background-color: #a92b2b;
    border-radius: 0 4px 4px 0;
}
```
